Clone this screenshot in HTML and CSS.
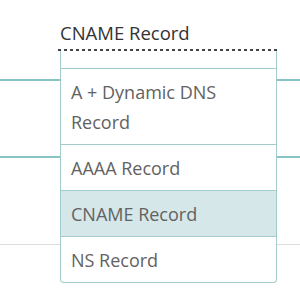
FILE: index.html
```html
<!DOCTYPE html>
<html lang="en">
<head>
    <meta charset="UTF-8">
    <meta name="viewport" content="width=device-width, initial-scale=1.0">
    <link rel="stylesheet" href="styles.css">
    <title>DNS Records</title>
</head>
<body>
    <div class="sheet">

        <div class="row row-first"></div>
        <div class="row row-second"></div>
        <div class="row row-third"></div>

        <div class="select">
            <div class="select-value">CNAME Record</div>
            <ul class="menu">
                <li class="option option-empty"></li>
                <li class="option">A + Dynamic DNS Record</li>
                <li class="option">AAAA Record</li>
                <li class="option selected">CNAME Record</li>
                <li class="option">NS Record</li>
            </ul>
        </div>

    </div>
</body>
</html>
```

FILE: styles.css
```css
*{
    margin: 0;
    padding: 0;
    box-sizing: border-box;
}

body{
    background: #ffffff;
    font-family: 'Open Sans', Lato, sans-serif;
}

.sheet{
    position: relative;
    width: 300px;
    height: 300px;
}

.row{
    border-bottom: 2px solid #86c4c5;
}

.row-first{
    height: 81px;
}

.row-second{
    height: 77px;
}

.row-third{
    height: 87px;
    border-bottom: 1px solid #dddddd;
}

.select{
    position: absolute;
    top: 20px;
    left: 58px;
    width: 219px;
}

.select-value{
    padding-left: 2px;
    padding-bottom: 5px;
    font-size: 18.5px;
    line-height: 26px;
    color: #333333;
    background: repeating-linear-gradient(to right, #444444 0 3px, transparent 3px 6px) bottom left / 100% 2px no-repeat;
}

.menu{
    list-style: none;
    margin-left: 2px;
    background: #ffffff;
    border: 1px solid #a3cdcd;
    border-top: none;
    border-radius: 0 0 4px 4px;
    overflow: hidden;
}

.option{
    padding: 8px 10px 7px;
    font-size: 18px;
    line-height: 30px;
    color: #626262;
    border-bottom: 1px solid #a3cdcd;
}

.option:last-child{
    border-bottom: none;
}

.option-empty{
    height: 18px;
    padding: 0;
}

.selected{
    background: #d5e7e9;
}
```
